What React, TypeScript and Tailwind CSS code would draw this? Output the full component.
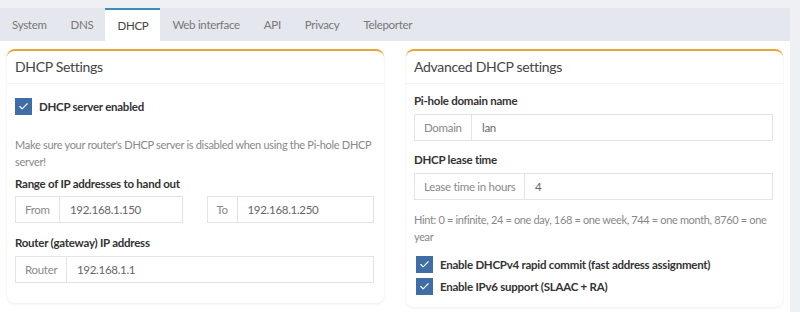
import { Check } from 'lucide-react';

const tabs = ['System', 'DNS', 'DHCP', 'Web interface', 'API', 'Privacy', 'Teleporter'];

function Checkbox({ label }: { label: string }) {
  return (
    <div className="flex items-center gap-[7px]">
      <span className="flex h-[17px] w-[17px] items-center justify-center bg-[#3e6ea5]">
        <Check className="h-[11px] w-[11px] text-white" strokeWidth={2.5} />
      </span>
      <span className="font-bold tracking-[-0.25px] text-[#333]">{label}</span>
    </div>
  );
}

function InputGroup({ addon, value, className = '', addonW }: { addon: string; value: string; className?: string; addonW: string }) {
  return (
    <div className={`flex h-[27px] border border-[#e3e3e3] ${className}`}>
      <span className={`flex shrink-0 items-center whitespace-nowrap border-r border-[#e3e3e3] px-[9px] text-[#8a8a8a] ${addonW}`}>{addon}</span>
      <span className="flex items-center px-[10px] text-[#666]">{value}</span>
    </div>
  );
}

function Card({ title, children }: { title: string; children: React.ReactNode }) {
  return (
    <div className="flex-1 rounded-[8px] border-t-[2px] border-[#e8a33a] bg-white shadow-[0_1px_3px_rgba(0,0,0,0.08)]">
      <div className="border-b border-[#f2f2f2] px-[8px] pb-[8px] pt-[7px] text-[14px] tracking-[-0.3px] text-[#444]">{title}</div>
      {children}
    </div>
  );
}

export default function App() {
  return (
    <div
      className="h-[312px] w-[800px] bg-[#eef0f4] pt-[8px] text-[11.5px] leading-[17px] tracking-[-0.3px]"
      style={{ fontFamily: 'Lato, "Liberation Sans", sans-serif' }}
    >
      <div className="w-[790px]">
        <div className="flex h-[33px] bg-[#e4e7ee]">
          {tabs.map((t) => (
            <div
              key={t}
              className={
                t === 'DHCP'
                  ? 'flex items-center border-t-[2px] border-[#3c8dbc] bg-white px-[12px] text-[#444]'
                  : 'flex items-center px-[12px] text-[#777]'
              }
            >
              {t}
            </div>
          ))}
        </div>
        <div className="flex h-[271px] items-start gap-[22px] bg-white px-[7px] pt-[8px]">
          <Card title="DHCP Settings">
            <div className="pb-[20px] pl-[8px] pr-[10px] pt-[14px]">
              <Checkbox label="DHCP server enabled" />
              <p className="mt-[21px] text-[11px] tracking-[-0.3px] text-[#888]">
                Make sure your router's DHCP server is disabled when using the Pi-hole DHCP server!
              </p>
              <div className="mt-[5px] font-bold tracking-[-0.25px] text-[#333]">Range of IP addresses to hand out</div>
              <div className="mt-[4px] flex gap-[24px]">
                <InputGroup addon="From" value="192.168.1.150" className="flex-1" addonW="w-[44px]" />
                <InputGroup addon="To" value="192.168.1.250" className="flex-1" addonW="w-[30px]" />
              </div>
              <div className="mt-[11px] font-bold tracking-[-0.25px] text-[#333]">Router (gateway) IP address</div>
              <InputGroup addon="Router" value="192.168.1.1" className="mt-[5px]" addonW="w-[51px]" />
            </div>
          </Card>
          <Card title="Advanced DHCP settings">
            <div className="pb-[12px] pl-[8px] pr-[10px] pt-[8px]">
              <div className="font-bold tracking-[-0.25px] text-[#333]">Pi-hole domain name</div>
              <InputGroup addon="Domain" value="lan" className="mt-[5px]" addonW="w-[57px]" />
              <div className="mt-[10px] font-bold tracking-[-0.25px] text-[#333]">DHCP lease time</div>
              <InputGroup addon="Lease time in hours" value="4" className="mt-[5px]" addonW="w-[110px]" />
              <p className="mt-[11px] text-[11px] tracking-[-0.35px] text-[#888]">
                Hint: 0 = infinite, 24 = one day, 168 = one week, 744 = one month, 8760 = one year
              </p>
              <div className="mt-[11px] flex flex-col gap-[5px] pl-[2px]">
                <Checkbox label="Enable DHCPv4 rapid commit (fast address assignment)" />
                <Checkbox label="Enable IPv6 support (SLAAC + RA)" />
              </div>
            </div>
          </Card>
        </div>
      </div>
    </div>
  );
}
